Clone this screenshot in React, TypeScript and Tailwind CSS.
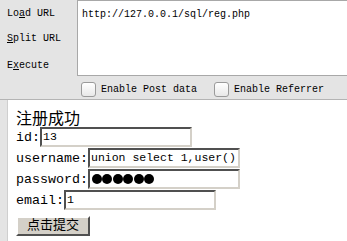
import React from "react";

const mono = "font-['Liberation_Mono','DejaVu_Sans_Mono',monospace]";
const cjk = "font-['Liberation_Mono','Noto_Sans_CJK_SC',monospace]";

const inset =
  "h-[20px] border-2 border-t-[#505050] border-l-[#505050] border-r-[#d4d0c8] border-b-[#d4d0c8] bg-white flex items-center px-[1px] text-[11.5px] text-black whitespace-nowrap overflow-hidden";

type FieldProps = {
  label: string;
  width: string;
  children: React.ReactNode;
};

const Field = ({ label, width, children }: FieldProps) => (
  <div className="flex items-center h-[20px] mb-[1px]">
    <span className={`${mono} text-[13.33px] leading-[20px] pt-[2px]`}>{label}</span>
    <div className={`${inset} ${mono} ${width}`}>{children}</div>
  </div>
);

const Check = ({ text }: { text: string }) => (
  <div className="flex items-center gap-[5px]">
    <div className="w-[15px] h-[15px] rounded-[3px] border border-[#9a9a9a] bg-gradient-to-b from-white to-[#e8e8e8]" />
    <span className={`${mono} text-[10px] text-black`}>{text}</span>
  </div>
);

export default function App() {
  return (
    <div className="w-[347px] h-[241px] overflow-hidden bg-white">
      <div className="flex h-[100px] bg-[#e4e4e4] border-b border-[#b4b4b4]">
        <div className={`w-[77px] shrink-0 ${mono} text-[10px] text-black pl-[7px]`}>
          <div className="pt-[6px] h-[31px]">
            Lo<span className="underline">a</span>d URL
          </div>
          <div className="h-[27px]">
            <span className="underline">S</span>plit URL
          </div>
          <div>
            E<span className="underline">x</span>ecute
          </div>
        </div>
        <div className="flex-1 flex flex-col">
          <div className={`h-[76px] -mr-[4px] border border-[#a8a8a8] bg-white pl-[4px] pt-[6px] ${mono} text-[10px] text-black`}>
            http://127.0.0.1/sql/reg.php
          </div>
          <div className="flex items-center gap-[17px] pl-[4px] pt-[6px]">
            <Check text="Enable Post data" />
            <Check text="Enable Referrer" />
          </div>
        </div>
      </div>
      <div className="flex h-[141px]">
        <div className="w-[8px] shrink-0 bg-[#e4e4e4] border-r border-[#cfcfcf]" />
        <div className="flex-1 pl-[8px] pt-[8px] text-black">
          <div className="h-[19px] leading-[19px] text-[16px] font-['Noto_Sans_CJK_SC',sans-serif]">
            注册成功
          </div>
          <Field label="id:" width="w-[152px]">13</Field>
          <Field label="username:" width="w-[152px]">union select 1,user()</Field>
          <Field label="password:" width="w-[152px]">
            <div className="flex gap-[0.5px] pl-[1px]">
              {[0, 1, 2, 3, 4, 5].map((i) => (
                <span key={i} className="w-[10px] h-[10px] rounded-full bg-black" />
              ))}
            </div>
          </Field>
          <Field label="email:" width="w-[152px]">1</Field>
          <button
            className={`w-[74px] h-[20px] bg-[#d4d0c8] border-2 border-t-white border-l-white border-r-[#505050] border-b-[#505050] text-[13px] leading-none text-black ${cjk}`}
          >
            点击提交
          </button>
        </div>
      </div>
    </div>
  );
}
